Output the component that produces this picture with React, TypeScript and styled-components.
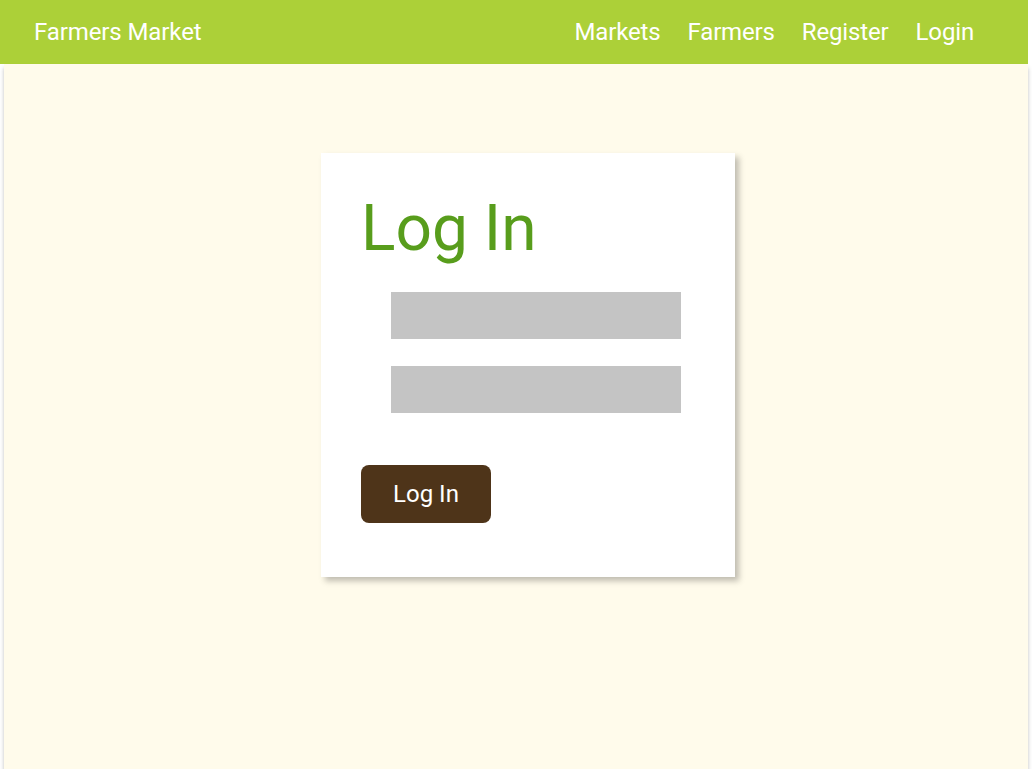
import React from "react";
import styled, { createGlobalStyle } from "styled-components";

const Global = createGlobalStyle`
  html, body { margin: 0; padding: 0; background: #ffffff; }
  body { font-family: Roboto, "Noto Sans", sans-serif; }
`;

const Shell = styled.div`
  width: 1028px;
  display: flex;
  flex-direction: column;
`;

const Header = styled.header`
  height: 64px;
  background: #acd038;
  display: flex;
  align-items: center;
  justify-content: space-between;
  padding: 0 54px 0 34px;
  box-sizing: border-box;
  color: #ffffff;
`;

const Brand = styled.div`
  font-size: 24px;
  letter-spacing: -0.1px;
`;

const Nav = styled.nav`
  display: flex;
  gap: 27px;
`;

const NavLink = styled.a`
  color: #ffffff;
  text-decoration: none;
  font-size: 24px;
  letter-spacing: -0.15px;
`;

const Main = styled.main`
  margin-left: 4px;
  height: 705px;
  background: #fffbeb;
  box-shadow: 0 4px 4px rgba(0, 0, 0, 0.25);
  display: flex;
  justify-content: center;
  align-items: flex-start;
  padding: 89px 0 0 0;
  box-sizing: border-box;
`;

const Card = styled.section`
  width: 414px;
  height: 424px;
  margin-left: 24px;
  background: #ffffff;
  box-shadow: 4px 4px 6px rgba(0, 0, 0, 0.25);
  box-sizing: border-box;
  padding: 38px 40px 0 40px;
  display: flex;
  flex-direction: column;
`;

const Title = styled.h1`
  margin: 0;
  font-weight: 400;
  font-size: 64px;
  line-height: 75px;
  color: #589d1c;
`;

const Fields = styled.div`
  display: flex;
  flex-direction: column;
  gap: 27px;
  margin: 26px 0 0 30px;
`;

const Field = styled.div`
  width: 290px;
  height: 47px;
  background: #c4c4c4;
`;

const Button = styled.button`
  margin-top: 52px;
  width: 130px;
  height: 58px;
  border: none;
  border-radius: 8px;
  background: #4e3419;
  color: #ffffff;
  font-family: Roboto, "Noto Sans", sans-serif;
  font-size: 24px;
  padding: 0;
  cursor: pointer;
`;

export default function App() {
  return (
    <>
      <Global />
      <Shell>
        <Header>
          <Brand>Farmers Market</Brand>
          <Nav>
            <NavLink>Markets</NavLink>
            <NavLink>Farmers</NavLink>
            <NavLink>Register</NavLink>
            <NavLink>Login</NavLink>
          </Nav>
        </Header>
        <Main>
          <Card>
            <Title>Log In</Title>
            <Fields>
              <Field />
              <Field />
            </Fields>
            <Button>Log In</Button>
          </Card>
        </Main>
      </Shell>
    </>
  );
}
